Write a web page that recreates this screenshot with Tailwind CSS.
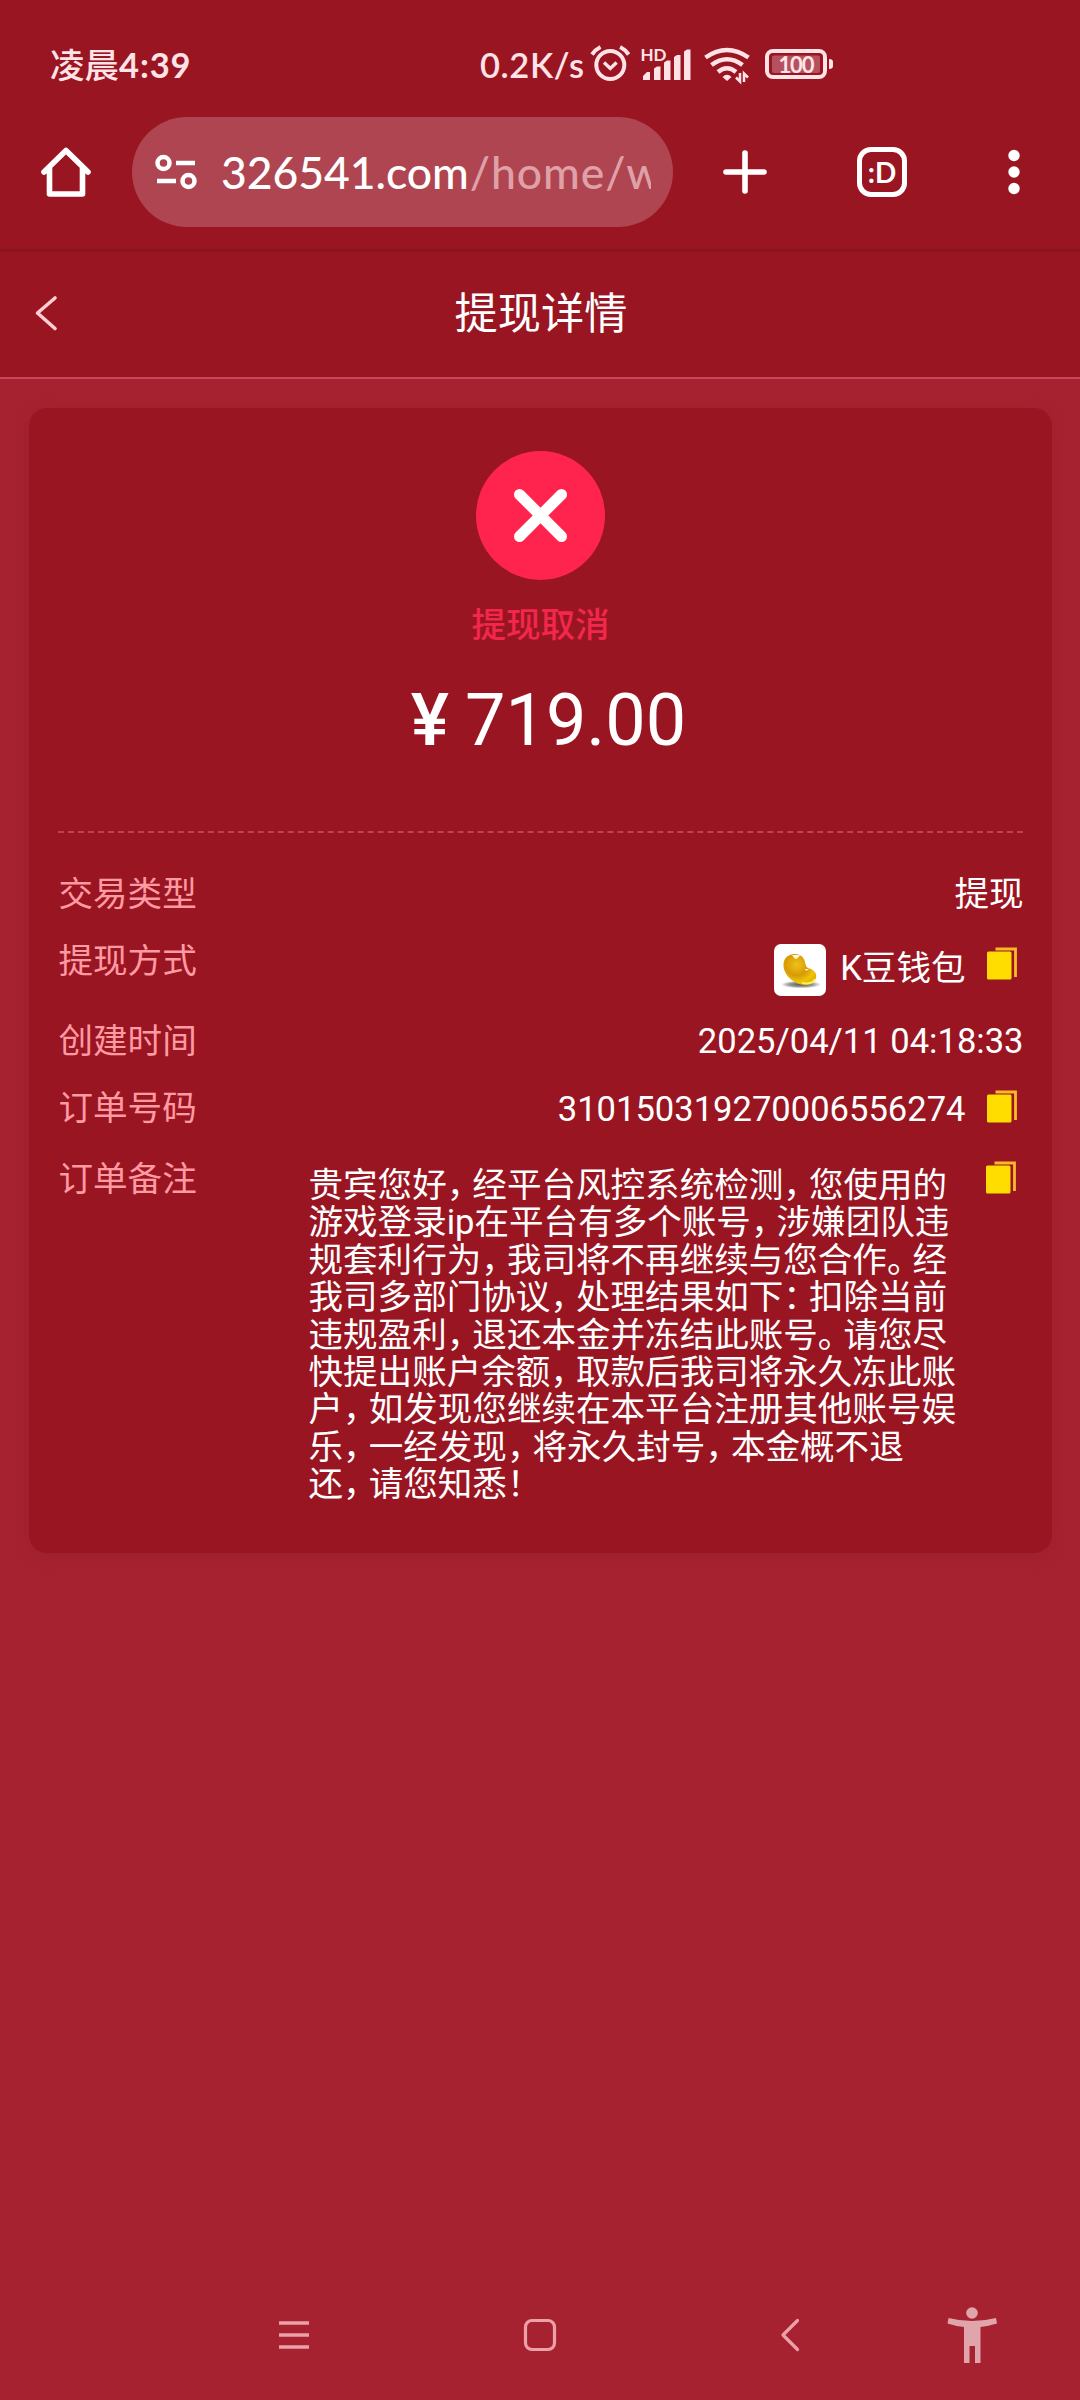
<!DOCTYPE html>
<html lang="zh-CN">
<head>
<meta charset="utf-8">
<title>提现详情</title>
<script src="https://cdn.jsdelivr.net/npm/@tailwindcss/browser@4"></script>
</head>
<body class="w-[1080px] h-[2400px] overflow-hidden bg-[#a72230] text-white font-[Roboto,'Noto_Sans_CJK_SC',sans-serif] flex flex-col">

<!-- status bar + browser toolbar -->
<div class="h-[252px] shrink-0 bg-[#9a1522] border-b-[3px] border-[#8d1320]">
  <div class="h-[117px] pt-[44px] pl-[50px] flex items-start text-[#ffe3e7] text-[34.5px] leading-[42px] font-medium font-[Lato,'Noto_Sans_CJK_SC',sans-serif]">
    <div class="w-[430px] whitespace-nowrap flex"><span>凌晨</span><span class="font-[Lato] font-bold tracking-[0.9px]">4:39</span></div>
    <div class="w-[106px] whitespace-nowrap tracking-[0.6px] font-[Lato] font-semibold">0.2K/s</div>
    <svg class="w-[250px] h-[42px]" viewBox="586 44 250 42" fill="none" stroke="#ffe3e7">
      <circle cx="610.3" cy="65" r="14" stroke-width="4"/>
      <path d="M604 62.5l6.3 6 6.3-6" stroke-width="3.4"/>
      <path d="M592 54.500q3.500-5 8.500-7.500M628.600 54.500q-3.500-5-8.500-7.500" stroke-width="4"/>
      <text x="640.500" y="60.500" font-size="17" font-weight="700" stroke="none" fill="#ffe3e7" font-family="Lato">HD</text>
      <g fill="#ffe3e7" stroke="none"><path d="M643 80v-4l4-4h3v8zM654 80V68.500l3-2h3.500V80zM664 80V62.500l3-2h3.500V80zM674 80V57l3-2h3.500V80zM684 80V51.500l3-2h3.500V80z"/></g>
      <g stroke-width="4.500"><path d="M705.500 57.500Q727 42.500 748.500 57.500"/><path d="M711.500 65Q727 53.500 742.500 65"/><path d="M718 72Q727 64.500 736 72"/></g>
      <path d="M722.500 77q4.500-4.500 9 0l-4.500 4z" fill="#ffe3e7" stroke="none"/>
      <path d="M740 73v8.500l-4-4M744 82v-8.500l4 4" stroke-width="2.500"/>
      <rect x="767" y="51" width="58" height="26" rx="6" stroke-width="4"/>
      <rect x="772" y="55.500" width="48" height="17.500" rx="2" fill="#b7505e" stroke="none"/>
      <path d="M829 59q4 0 4 3v4q0 3-4 3z" fill="#ffe3e7" stroke="none"/>
      <text x="796.500" y="72.500" text-anchor="middle" font-size="22" font-weight="700" stroke="none" fill="#ffe3e7" font-family="Lato" textLength="36">100</text>
    </svg>
  </div>
  <div class="h-[110px] flex items-center">
    <svg class="ml-[40px] w-[52px] h-[52px]" viewBox="40 146 52 52" fill="none" stroke="#fff" stroke-width="5.600" stroke-linejoin="round" stroke-linecap="round"><path d="M44 172L66 150.500 88 172M49.500 168V194H82.500V168"/></svg>
    <div class="ml-[40px] w-[541px] h-[110px] rounded-full bg-[#ae4550] pl-[23px] pr-[22px] flex items-center overflow-hidden">
      <svg class="w-[42px] h-[36px] shrink-0" viewBox="155 154 42 36" fill="none" stroke="#fff" stroke-width="4.500"><circle cx="163.500" cy="163" r="6"/><path d="M176 163h19M157 181h19"/><circle cx="188.500" cy="181" r="6"/></svg>
      <div class="ml-[24px] w-[430px] overflow-hidden whitespace-nowrap text-[44.5px] leading-[56px] font-[Lato] font-medium tracking-[-0.05px]">326541.com<span class="text-[#dfa0a8] ml-[1px] tracking-[0.9px]">/home/w</span></div>
    </div>
    <svg class="ml-[48px] w-[48px] h-[48px]" viewBox="0 0 48 48" stroke="#fff" stroke-width="5.600" stroke-linecap="round"><path d="M24 5v38M5 24h38"/></svg>
    <div class="ml-[88px] w-[50px] h-[50px] rounded-[14px] border-[5.5px] border-white flex items-center justify-center text-[28px] leading-none font-bold font-[Lato]">:D</div>
    <svg class="ml-[99px] w-[16px] h-[48px]" viewBox="0 0 16 48" fill="#fff"><circle cx="8" cy="7.500" r="5.700"/><circle cx="8" cy="24" r="5.700"/><circle cx="8" cy="40.500" r="5.700"/></svg>
  </div>
</div>

<!-- page header -->
<div class="h-[127px] shrink-0 bg-[#9a1522] border-b-2 border-[#c84a5a] flex items-center">
  <svg class="ml-[34px] mb-[3px] w-[26px] h-[38px]" viewBox="34.5 294 26 38" fill="none" stroke="#ffcdd2" stroke-width="3.600" stroke-linecap="round" stroke-linejoin="round"><path d="M55.500 298L38 313l17.500 15.500"/></svg>
  <div class="w-[962px] text-center text-[43.2px] leading-[56px]">提现详情</div>
</div>

<!-- detail card -->
<div class="mt-[29px] mx-auto w-[1023px] h-[1145px] shrink-0 rounded-[18px] bg-[#9a1522] shadow-[0_3px_17px_rgba(150,32,46,0.6)] px-[29px] pt-[43px] flex flex-col">
  <svg class="w-[129px] h-[129px] mx-auto shrink-0" viewBox="0 0 129 129"><circle cx="64.500" cy="64.500" r="64.500" fill="#ff244e"/><path d="M43.500 43.500l42 42M85.500 43.500l-42 42" stroke="#fff" stroke-width="11" stroke-linecap="round"/></svg>
  <div class="mt-[24px] pl-px text-center text-[34.56px] leading-[42px] font-medium text-[#f3274c]">提现取消</div>
  <div class="mt-[33px] h-[84px] pl-[17px] flex justify-center text-[72px] leading-[84px]"><span class="font-medium mr-[16px]">¥</span><span>719.00</span></div>
  <div class="mt-[68px] border-t-2 border-dashed border-[#c63f4f]"></div>

  <div class="mt-[41px] ml-px -mr-px text-[34.56px] leading-[40px] flex flex-col">
    <div class="flex justify-between h-[67px]"><span class="text-[#ff9aa3]">交易类型</span><span>提现</span></div>
    <div class="flex justify-between h-[80px]">
      <span class="text-[#ff9aa3]">提现方式</span>
      <div class="flex items-start pt-[3px]">
        <svg class="w-[52px] h-[52px]" viewBox="0 0 52 52">
          <defs>
            <radialGradient id="bean" cx="0.4" cy="0.35" r="0.7"><stop offset="0" stop-color="#f0c21a"/><stop offset="0.5" stop-color="#d79a06"/><stop offset="0.8" stop-color="#efc40a"/><stop offset="1" stop-color="#e0b000"/></radialGradient>
            <radialGradient id="shade"><stop offset="0" stop-color="#555"/><stop offset="0.6" stop-color="#999"/><stop offset="1" stop-color="#fff"/></radialGradient>
          </defs>
          <rect width="52" height="52" rx="7" fill="#fff"/>
          <ellipse cx="27" cy="40.500" rx="20" ry="3.800" fill="url(#shade)"/>
          <path d="M10 17c2-5 6-7 11-7s9 3 10 8c1 5 2 6 6 7 4 2 6 5 5 9-2 6-8 7.500-15 6.500C17 38 7 28 10 17z" fill="url(#bean)"/>
          <path d="M28 39c6 1 11 0 13-4" fill="none" stroke="#fff04a" stroke-width="2"/>
          <path d="M18 11l3 4 3-1 2-3zM31 25l4 0-3 2z" fill="#fff8d8"/>
        </svg>
        <span class="ml-[14px] mt-[4px]">K豆钱包</span>
        <svg class="ml-[18px] mr-[5px] mt-px w-[35px] h-[40px]" viewBox="0 0 35 40"><path d="M11.500 4h20v28" fill="none" stroke="#f9b929" stroke-width="2.800"/><rect x="3" y="6.500" width="24.500" height="28" rx="1.500" fill="#fd0"/></svg>
      </div>
    </div>
    <div class="flex justify-between h-[67px]"><span class="text-[#ff9aa3]">创建时间</span><span>2025/04/11 04:18:33</span></div>
    <div class="flex justify-between h-[71px]">
      <span class="text-[#ff9aa3]">订单号码</span>
      <div class="flex"><span class="mt-px">310150319270006556274</span><svg class="ml-[18px] mr-[5px] w-[35px] h-[40px]" viewBox="0 0 35 40"><path d="M11.500 4h20v28" fill="none" stroke="#f9b929" stroke-width="2.800"/><rect x="3" y="6.500" width="24.500" height="28" rx="1.500" fill="#fd0"/></svg></div>
    </div>
    <div class="flex">
      <span class="w-[250px] text-[#ff9aa3]">订单备注</span>
      <div class="mt-[8px] w-[674px] whitespace-nowrap leading-[37.4px]">
        贵宾您好<span class="tracking-[-0.257em]">，</span>经平台风控系统检测<span class="tracking-[-0.257em]">，</span>您使用的<br>
        游戏登录ip在平台有多个账号<span class="tracking-[-0.257em]">，</span>涉嫌团队违<br>
        规套利行为<span class="tracking-[-0.257em]">，</span>我司将不再继续与您合作<span class="tracking-[-0.257em]">。</span>经<br>
        我司多部门协议<span class="tracking-[-0.257em]">，</span>处理结果如下<span class="tracking-[-0.257em]">：</span>扣除当前<br>
        违规盈利<span class="tracking-[-0.257em]">，</span>退还本金并冻结此账号<span class="tracking-[-0.257em]">。</span>请您尽<br>
        快提出账户余额<span class="tracking-[-0.257em]">，</span>取款后我司将永久冻此账<br>
        户<span class="tracking-[-0.257em]">，</span>如发现您继续在本平台注册其他账号娱<br>
        乐<span class="tracking-[-0.257em]">，</span>一经发现<span class="tracking-[-0.257em]">，</span>将永久封号<span class="tracking-[-0.257em]">，</span>本金概不退<br>
        还<span class="tracking-[-0.257em]">，</span>请您知悉！
      </div>
      <svg class="w-[35px] h-[40px]" viewBox="0 0 35 40"><path d="M11.500 4h20v28" fill="none" stroke="#f9b929" stroke-width="2.800"/><rect x="3" y="6.500" width="24.500" height="28" rx="1.500" fill="#fd0"/></svg>
    </div>
  </div>
</div>

<!-- system navigation -->
<div class="mt-auto h-[130px] shrink-0">
  <svg class="w-[1080px] h-[130px]" viewBox="0 2270 1080 130" fill="none" stroke="#eca0a8">
    <path d="M279 2323h30M279 2335h30M279 2347h30" stroke-width="3.400"/>
    <rect x="525.500" y="2320.500" width="29" height="29" rx="6.500" stroke-width="3.200"/>
    <path d="M797.500 2320.500L783 2335l14.500 14.500" stroke-width="3.200" stroke-linecap="round" stroke-linejoin="round"/>
    <g fill="#e0a4ab" stroke="none"><circle cx="972" cy="2313" r="5.800"/><path d="M948.500 2318Q972 2324 996 2318L997 2323.500Q989 2326 980.500 2327V2363H975V2346H969.500V2363H964V2327Q955 2326 947.500 2323.500z"/></g>
  </svg>
</div>
</body>
</html>
